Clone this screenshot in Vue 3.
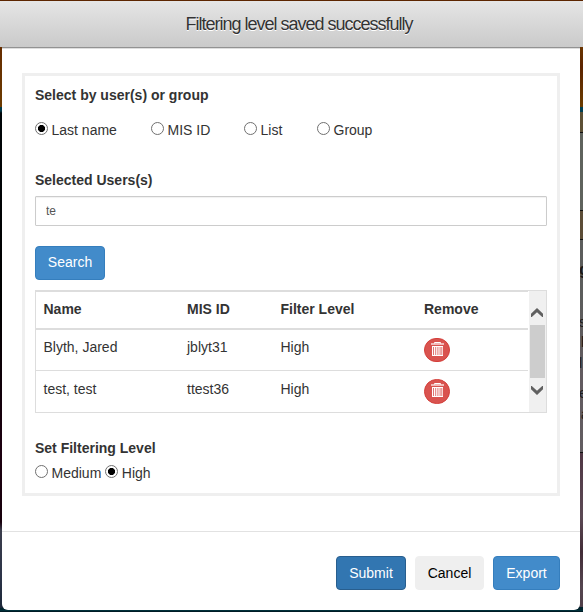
<script setup>
import { ref } from 'vue'

const searchBy = ref('Last name')
const searchOptions = ['Last name', 'MIS ID', 'List', 'Group']
const query = ref('te')
const level = ref('High')
const levels = ['Medium', 'High']
const users = ref([
  { name: 'Blyth, Jared', id: 'jblyt31', level: 'High' },
  { name: 'test, test', id: 'ttest36', level: 'High' },
])
const remove = (user) => {
  users.value = users.value.filter((u) => u !== user)
}
</script>

<template>
  <div class="page">
    <div class="edge edge-left"></div>
    <div class="edge edge-right">
      <span class="frag f1">g</span>
      <span class="frag f2">s</span>
      <span class="frag f3">l</span>
      <span class="frag f4">l</span>
      <span class="frag f5">e</span>
      <span class="frag f6">a</span>
    </div>

    <header class="title-bar">Filtering level saved successfully</header>

    <main class="modal">
      <section class="panel">
        <h4>Select by user(s) or group</h4>
        <div class="radios search-by">
          <label v-for="o in searchOptions" :key="o">
            <input v-model="searchBy" type="radio" name="by" :value="o" /><span>{{ o }}</span>
          </label>
        </div>

        <h4>Selected Users(s)</h4>
        <input v-model="query" class="text" type="text" />
        <button class="btn primary search">Search</button>

        <div class="grid-box">
          <div class="table">
            <div class="row head">
              <span>Name</span><span>MIS ID</span><span>Filter Level</span><span>Remove</span>
            </div>
            <div v-for="u in users" :key="u.id" class="row">
              <span>{{ u.name }}</span><span>{{ u.id }}</span><span>{{ u.level }}</span>
              <button class="trash" aria-label="Remove" @click="remove(u)">
                <svg width="13" height="16" viewBox="0 0 13 16">
                  <path d="M3.5 2.5v-1h6v1" fill="none" stroke="#fff" />
                  <path d="M0 2.4h13v1.2H0z" fill="#fff" />
                  <path d="M1 5h11v10H1z" fill="#fff" />
                  <path d="M2.5 6v8M4.7 6v8M6.9 6v8M9.1 6v8M10.8 6v8" stroke="#d9534f" stroke-width=".8" />
                </svg>
              </button>
            </div>
          </div>
          <div class="scrollbar">
            <svg width="12" height="9" viewBox="0 0 12 9">
              <path d="M0 5.8 6 0l6 5.8V9h-.8L6 4.2.8 9H0z" fill="#606060" />
            </svg>
            <div class="thumb"></div>
            <svg width="12" height="9" viewBox="0 0 12 9">
              <path d="M0 3.2 6 9l6-5.8V0h-.8L6 4.8.8 0H0z" fill="#606060" />
            </svg>
          </div>
        </div>

        <h4>Set Filtering Level</h4>
        <div class="radios levels">
          <label v-for="l in levels" :key="l">
            <input v-model="level" type="radio" name="level" :value="l" /><span>{{ l }}</span>
          </label>
        </div>
      </section>

      <footer>
        <button class="btn submit">Submit</button>
        <button class="btn cancel">Cancel</button>
        <button class="btn primary export">Export</button>
      </footer>
    </main>
  </div>
</template>

<style>
body {
  overflow: hidden;
}
</style>

<style scoped>
* {
  box-sizing: border-box;
}
.page {
  position: relative;
  width: 583px;
  height: 612px;
  overflow: hidden;
  padding-top: 1px;
  background: linear-gradient(#5c2500 0 1px, transparent 1px 610px, #00303a 610px 611px, #001c26 611px);
  background-color: #00222c;
  font: 14px/20px "Liberation Sans", Arial, sans-serif;
  color: #333;
}
.edge {
  position: absolute;
  top: 47px;
  overflow: hidden;
}
.edge-left {
  left: 0;
  width: 6px;
  height: 561px;
  background: linear-gradient(#662d00 0, #6b3a00 60px, #003848 60px 64px, #000508 66px, #000 260px, #1c0010 400px, #17000c 475px, #3b3d4c 483px, #2c3448 530px, #1c2638 561px);
}
.edge-right {
  right: 0;
  width: 7px;
  height: 560px;
  background: linear-gradient(#6a3500 0, #5c2400 20px, #6b3c00 60px, #004054 60px 65px, #5d5035 65px 85px, #111 85px 86px, #5f635d 86px 163px, #111 163px 164px, #5c4d37 164px 192px, #111 192px 193px, #5c5d5c 193px 250px, #625b60 330px, #625d61 405px, #111 405px 406px, #503745 406px, #5b4954 470px, #422c37 505px, #554650 540px, #503f49 560px);
}
.frag {
  position: absolute;
  left: 3px;
  font-size: 14px;
  line-height: 16px;
  color: #1b1b1b;
}
.f1 {
  top: 215px;
  font-weight: bold;
  font-size: 17px;
}
.f2 {
  top: 267px;
}
.f3 {
  top: 287px;
  left: 5px;
  font-weight: bold;
}
.f4 {
  top: 308px;
}
.f5 {
  top: 338px;
}
.f6 {
  top: 359px;
  left: 5px;
}
.title-bar {
  position: relative;
  height: 46px;
  padding: 13px 0 0 15px;
  background: linear-gradient(#e5e5e5, #cacaca);
  text-align: center;
  font-size: 18px;
  letter-spacing: -1px;
  text-shadow: 0 1px 0 #fff;
}
.modal {
  position: relative;
  width: 578px;
  height: 563px;
  margin-left: 2px;
  padding-top: 26px;
  background: linear-gradient(#929292 0 1px, #dedede 1px 2px, #fff 2px);
  border-radius: 0 0 6px 6px;
}
.panel {
  width: 538px;
  height: 423px;
  margin-left: 20px;
  padding: 9px 10px 0;
  border: 3px solid #efefef;
}
h4 {
  margin: 0;
  font-size: 14px;
  line-height: 20px;
}
.radios label {
  display: flex;
  align-items: flex-start;
  gap: 3.5px;
  white-space: nowrap;
}
.radios input {
  appearance: none;
  flex: none;
  width: 13px;
  height: 13px;
  margin: 2px 0 0;
  border: 1px solid #707070;
  border-radius: 50%;
  background: #fff;
}
.radios input:checked {
  background: radial-gradient(circle at center, #000 3.2px, #fff 3.9px);
}
.search-by {
  display: grid;
  grid-template-columns: 116px 93px 73px 80px;
  margin: 15px 0 30px;
}
.levels {
  display: flex;
  gap: 4px;
  margin-top: 5px;
}
.text {
  display: block;
  width: 512px;
  height: 30px;
  margin-top: 6px;
  padding: 0 10px;
  border: 1px solid #ccc;
  border-radius: 1px;
  outline: 0;
  box-shadow: inset 0 1px 1px rgba(0, 0, 0, 0.06);
  font: 12px "Liberation Sans", Arial, sans-serif;
  color: #555;
}
.btn {
  height: 34px;
  padding: 0 0 1px;
  border: 1px solid;
  border-radius: 4px;
  font: 14px/20px "Liberation Sans", Arial, sans-serif;
  color: #fff;
}
.primary {
  background: #428bca;
  border-color: #357ebd;
}
.search {
  display: block;
  width: 70px;
  margin: 20px 0 10px;
  padding-bottom: 2px;
}
.grid-box {
  display: flex;
  width: 512px;
  height: 123px;
  margin-bottom: 25px;
  border: 1px solid #ddd;
}
.table {
  width: 492px;
}
.row {
  display: grid;
  grid-template-columns: 143.5px 93.5px 143.5px 80px;
  height: 42px;
  padding: 8px 0 0 7.5px;
  border-top: 1px solid #ddd;
}
.row.head {
  height: 38px;
  padding-top: 7px;
  border-bottom: 1px solid #ddd;
  font-weight: bold;
}
.row:nth-child(2) {
  height: 41px;
  padding-top: 7px;
}
.trash {
  display: flex;
  justify-content: center;
  width: 26px;
  height: 25px;
  padding: 2px 0 0 1px;
  border: 1px solid #d43f3a;
  border-radius: 13px;
  background: #d9534f;
}
.row:nth-child(2) .trash {
  height: 24px;
  margin-top: 1px;
}
.scrollbar {
  display: flex;
  flex-direction: column;
  align-items: flex-start;
  width: 17px;
  margin-left: auto;
  padding: 17px 0 0 1px;
  background: #f0f0f0;
}
.scrollbar svg {
  margin-left: 1px;
}
.thumb {
  width: 15px;
  height: 53px;
  margin: 8px 0;
  background: #cdcdcd;
}
footer {
  display: flex;
  height: 79px;
  margin-top: 35px;
  padding: 24px 0 0 334px;
  border-top: 1px solid #e2e2e2;
}
.submit {
  width: 70px;
  background: #3276b1;
  border-color: #285e8e;
}
.cancel {
  width: 69px;
  margin: 0 9px;
  background: #efefef;
  border-color: #efefef;
  color: #000;
}
.export {
  width: 67px;
}
</style>
